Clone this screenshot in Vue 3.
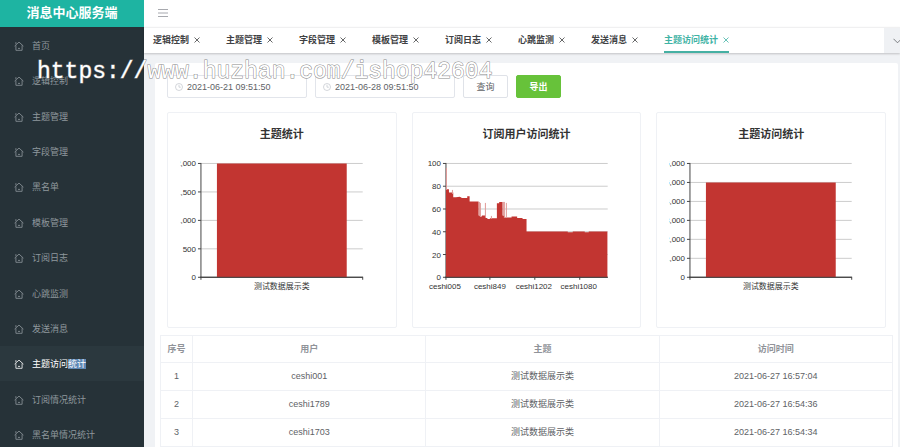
<script setup>
const menu = ['首页', '逻辑控制', '主题管理', '字段管理', '黑名单', '模板管理', '订阅日志', '心跳监测', '发送消息', '主题访问', '订阅情况统计', '黑名单情况统计']
const activeMenu = 9
const tabs = ['逻辑控制', '主题管理', '字段管理', '模板管理', '订阅日志', '心跳监测', '发送消息', '主题访问统计']
const activeTab = 7

const top = 51.5
const bottom = 165.5
const scale = (labels) =>
  labels.map((label, i) => ({ label, y: bottom - ((bottom - top) * i) / (labels.length - 1) }))

const block = (y) => `M50 ${bottom}V${y}H180V${bottom}Z`
const visits =
  'M34 165.5V77.3H37V80.7H41.3V85.3H44L48 84.8L50 86H55.3V84.3H57.7V89.7H66.7V103.7H68V104.7H70V103.7H73.7V106H75.5V107H78V106.3H85V91.3H87.3V90H90.7V103.7H92.7V105.7H99.7V104.7H105.3V106H110.7V107H114.7V119.7H156V120.5H161V119.7H173V120.5H177V119.7H195.7V165.5Z'

const charts = [
  {
    title: '主题统计',
    ticks: scale(['0', '500', '1,000', '1,500', '2,000']),
    shape: block(51.5),
    spikes: [],
    marks: [34, 196],
    names: [{ x: 115, label: '测试数据展示类' }]
  },
  {
    title: '订阅用户访问统计',
    ticks: scale(['0', '20', '40', '60', '80', '100']),
    shape: visits,
    spikes: [
      { x: 34, y: 56, w: 1, h: 22 },
      { x: 40, y: 78, w: 1, h: 4 },
      { x: 67, y: 90, w: 1, h: 14 },
      { x: 68, y: 91, w: 1, h: 14 },
      { x: 73, y: 91, w: 1, h: 14 },
      { x: 79, y: 104, w: 1, h: 3 },
      { x: 91, y: 90, w: 1, h: 14 },
      { x: 92, y: 90, w: 1, h: 16 },
      { x: 94, y: 91, w: 1, h: 15 }
    ],
    marks: [34, 78, 123, 168],
    names: [
      { x: 33, label: 'ceshi005' },
      { x: 78, label: 'ceshi849' },
      { x: 122, label: 'ceshi1202' },
      { x: 167, label: 'ceshi1080' }
    ]
  },
  {
    title: '主题访问统计',
    ticks: scale(['0', '1,000', '2,000', '3,000', '4,000', '5,000', '6,000']),
    shape: block(70.5),
    spikes: [],
    marks: [34, 196],
    names: [{ x: 115, label: '测试数据展示类' }]
  }
]

const rows = [
  [1, 'ceshi001', '测试数据展示类', '2021-06-27 16:57:04'],
  [2, 'ceshi1789', '测试数据展示类', '2021-06-27 16:54:36'],
  [3, 'ceshi1703', '测试数据展示类', '2021-06-27 16:54:34']
]
</script>

<template>
  <div class="layout">
    <aside class="sidebar">
      <h1 class="brand">消息中心服务端</h1>
      <nav class="menu">
        <a v-for="(item, i) in menu" :key="item" href="#" class="menu-item" :class="{ active: i === activeMenu }">
          <svg class="home" viewBox="0 0 10 10" aria-hidden="true">
            <path d="M0.6 5.1L5 1.1L9.4 5.1M1.9 4.4V9.3H8.1V4.4M1.9 3.2V1.2M4 7.4H6" />
          </svg>
          <span>{{ item }}<span v-if="i === activeMenu" class="picked">统计</span></span>
        </a>
      </nav>
    </aside>

    <main class="main">
      <header class="topbar">
        <button class="fold" aria-label="菜单">
          <svg viewBox="0 0 10 10"><path d="M0 1.5H10M0 5H10M0 8.5H10" /></svg>
        </button>
      </header>

      <div class="tabbar">
        <nav class="tabs">
          <a v-for="(tab, i) in tabs" :key="tab" href="#" class="tab" :class="{ active: i === activeTab }">
            {{ tab }}
            <svg class="close" viewBox="0 0 6 6" aria-hidden="true"><path d="M0.5 0.5L5.5 5.5M5.5 0.5L0.5 5.5" /></svg>
          </a>
        </nav>
        <button class="more" aria-label="更多">
          <svg viewBox="0 0 9 6"><path d="M0.5 0.8L4.5 4.8L8.5 0.8" /></svg>
        </button>
      </div>

      <section class="panel">
        <form class="filters" @submit.prevent>
          <label v-for="value in ['2021-06-21 09:51:50', '2021-06-28 09:51:50']" :key="value" class="date">
            <svg viewBox="0 0 8 8" aria-hidden="true"><circle cx="4" cy="4" r="3.5" /><path d="M4 1.8V4.2H5.8" /></svg>
            <input type="text" :value="value" aria-label="时间" />
          </label>
          <button class="btn">查询</button>
          <button class="btn primary">导出</button>
        </form>

        <div class="charts">
          <article v-for="chart in charts" :key="chart.title" class="chart">
            <h2>{{ chart.title }}</h2>
            <svg viewBox="1 30 228 185">
              <defs>
                <clipPath id="canvas"><rect x="13" y="30" width="210" height="180" /></clipPath>
              </defs>
              <g clip-path="url(#canvas)">
                <g v-for="tick in chart.ticks" :key="tick.y">
                  <path class="grid" :d="`M34 ${tick.y}H196`" />
                  <path class="axis" :d="`M31 ${tick.y}H34`" />
                  <text x="29" :y="tick.y + 3" text-anchor="end">{{ tick.label }}</text>
                </g>
              </g>
              <path class="axis" d="M34 51V166M33 165.5H196" />
              <path class="shape" :d="chart.shape" />
              <rect v-for="s in chart.spikes" :key="s.x" class="spike" :x="s.x" :y="s.y" :width="s.w" :height="s.h" />
              <path class="axis" d="M34 165.5H196" />
              <path v-for="m in chart.marks" :key="m" class="axis" :d="`M${m} 165V168`" />
              <text v-for="n in chart.names" :key="n.x" :x="n.x" y="177" text-anchor="middle">{{ n.label }}</text>
            </svg>
          </article>
        </div>

        <table class="records">
          <colgroup><col class="index" /><col /><col /><col /></colgroup>
          <thead>
            <tr><th>序号</th><th>用户</th><th>主题</th><th>访问时间</th></tr>
          </thead>
          <tbody>
            <tr v-for="row in rows" :key="row[0]"><td v-for="cell in row" :key="cell">{{ cell }}</td></tr>
          </tbody>
        </table>
      </section>
    </main>

    <div class="watermark">https://www.huzhan.com/ishop42604</div>
  </div>
</template>

<style>
body {
  margin: 0;
}
</style>

<style scoped>
.layout {
  position: relative;
  display: flex;
  height: 100vh;
  overflow: hidden;
  background: #f0f2f5;
  color: #606266;
  font: 9px/12px "Liberation Sans", "Noto Sans CJK SC", sans-serif;
}
.layout * {
  box-sizing: border-box;
}
svg {
  fill: none;
  stroke: currentColor;
}
a {
  color: inherit;
  text-decoration: none;
}
button,
input {
  margin: 0;
  padding: 0;
  border: 0;
  background: none;
  color: inherit;
  font: inherit;
}

.sidebar {
  flex: 0 0 144px;
  background: #263238;
  color: #8f989d;
}
.brand {
  margin: 0;
  padding-bottom: 2px;
  background: #1eb4a2;
  color: #fff;
  font-size: 13px;
  font-weight: 700;
  line-height: 25px;
  text-align: center;
}
.menu {
  display: grid;
  grid-auto-rows: 1fr;
  min-height: 425px;
}
.menu-item {
  display: flex;
  align-items: center;
  gap: 8px;
  padding: 2px 0 0 14px;
}
.menu-item.active {
  background: #2b383e;
  color: #fff;
}
.home {
  width: 10px;
  height: 10px;
  stroke-width: 0.8;
}
.picked {
  background: #5d87b5;
}

.main {
  flex: 1;
  min-width: 0;
}
.topbar {
  display: flex;
  align-items: center;
  height: 27px;
  padding: 0 14px 2px;
  background: #fff;
}
.fold {
  display: flex;
  color: #909399;
}
.fold svg {
  width: 10px;
  height: 10px;
  stroke-width: 0.8;
}
.tabbar {
  position: relative;
  display: flex;
  justify-content: space-between;
  height: 26px;
  border-top: 1px solid #f0f0f1;
  background: #fff;
  box-shadow: 0 1px 2px rgba(0, 0, 0, 0.2);
}
.tabs {
  display: flex;
  gap: 26px;
  padding-left: 9px;
}
.tab {
  display: flex;
  align-items: center;
  gap: 5px;
  padding-top: 1px;
  border-bottom: 2px solid transparent;
  color: #404143;
  font-weight: 700;
  white-space: nowrap;
}
.tab.active {
  border-color: #45b0a3;
  color: #3fb3a5;
}
.close {
  width: 6px;
  height: 6px;
  stroke-width: 0.8;
}
.more {
  display: flex;
  flex: 0 0 16px;
  align-items: center;
  padding-left: 9px;
  overflow: hidden;
  background: #eff1f4;
}
.more svg {
  flex: 0 0 9px;
  height: 6px;
  stroke-width: 0.8;
}

.panel {
  margin: 10px 2px 0 11px;
  padding: 12px 5px;
  border-radius: 2px;
  background: #fff;
}
.filters {
  display: flex;
  gap: 8px;
  padding: 0 7px;
}
.date {
  display: flex;
  flex: 0 1 140px;
  align-items: center;
  gap: 4px;
  min-width: 0;
  height: 23px;
  padding: 0 7px;
  border: 1px solid #e2e5eb;
  border-radius: 2px;
}
.date svg {
  flex: 0 0 8px;
  height: 8px;
  color: #c0c4cc;
  stroke-width: 0.7;
}
.date input {
  flex: 1;
  width: 100%;
  min-width: 0;
}
.btn {
  width: 45px;
  height: 23px;
  border: 1px solid #dfe2e8;
  border-radius: 2px;
}
.btn.primary {
  border-color: #67c23a;
  background: #67c23a;
  color: #fff;
  font-weight: 700;
}

.charts {
  display: grid;
  grid-template-columns: repeat(3, 1fr);
  gap: 15px;
  padding: 14px 7px 7px;
}
.chart {
  padding-top: 13px;
  border: 1px solid #eff1f5;
  border-radius: 2px;
}
.chart h2 {
  margin: 0;
  color: #333;
  font-size: 11px;
  font-weight: 700;
  line-height: 16px;
  text-align: center;
}
.chart svg {
  display: block;
  width: 100%;
}
.chart text {
  fill: #333;
  stroke: none;
  font-size: 8px;
}
.grid {
  stroke: #ccc;
}
.axis {
  stroke: #444;
}
.shape {
  fill: #c23531;
  stroke: none;
}
.spike {
  fill: #e09a97;
  stroke: none;
}

.records {
  width: 100%;
  border-collapse: collapse;
  table-layout: fixed;
  text-align: center;
}
.index {
  width: 32px;
}
.records th,
.records td {
  height: 28px;
  padding: 0;
  border: 1px solid #eff1f5;
}
.records th {
  height: 27px;
  color: #909399;
  font-weight: 700;
}

.watermark {
  position: absolute;
  top: 58px;
  left: 37px;
  color: #fff;
  font: 23px/28px "Liberation Mono", monospace;
  -webkit-text-stroke: 1px #888;
  paint-order: stroke fill;
  pointer-events: none;
}
</style>
